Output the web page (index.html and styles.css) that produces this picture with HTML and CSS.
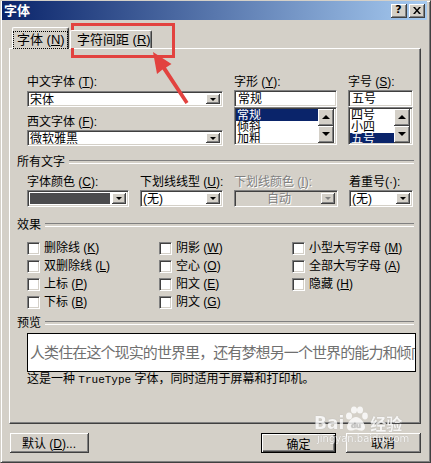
FILE: index.html
```html
<!DOCTYPE html>
<html>
<head>
<meta charset="UTF-8">
<title>字体</title>
<link rel="stylesheet" href="styles.css">
</head>
<body>
<div class="window">
    <div class="titlebar">
        <span class="title">字体</span>
        <div class="caption-buttons">
            <span class="cap-btn help">?</span>
            <span class="cap-btn close">
                <svg width="8" height="7" viewBox="0 0 8 7"><path d="M0 0h2l2 2.5 2-2.5h2l-3 3.5 3 3.5h-2l-2-2.5-2 2.5h-2l3-3.5z" fill="#000"/></svg>
            </span>
        </div>
    </div>
    <div class="dialog-body">
        <div class="tabs">
            <div class="tab active"><span class="focus">字体 (<u>N</u>)</span></div>
            <div class="tab">字符间距 (<u>R</u>)</div>
        </div>
        <div class="panel">
            <div class="font-row">
                <div class="col">
                    <label class="lbl">中文字体 (<u>T</u>):</label>
                    <div class="field combo first"><span class="value">宋体</span><span class="drop"></span></div>
                    <label class="lbl second-lbl">西文字体 (<u>F</u>):</label>
                    <div class="field combo second"><span class="value">微软雅黑</span><span class="drop"></span></div>
                </div>
                <div class="col">
                    <label class="lbl">字形 (<u>Y</u>):</label>
                    <div class="field edit"><span class="value">常规</span></div>
                    <div class="field listbox">
                        <div class="items">
                            <div class="item sel">常规</div>
                            <div class="item">倾斜</div>
                            <div class="item">加粗</div>
                        </div>
                        <div class="vscroll"><span class="sbtn up"></span><span class="sbtn down"></span></div>
                    </div>
                </div>
                <div class="col">
                    <label class="lbl">字号 (<u>S</u>):</label>
                    <div class="field edit"><span class="value">五号</span></div>
                    <div class="field listbox">
                        <div class="items">
                            <div class="item">四号</div>
                            <div class="item">小四</div>
                            <div class="item sel">五号</div>
                        </div>
                        <div class="vscroll"><span class="sbtn up"></span><span class="sbtn down"></span></div>
                    </div>
                </div>
            </div>

            <div class="group-title all-text">所有文字</div>
            <div class="attr-row">
                <div class="col">
                    <label class="lbl">字体颜色 (<u>C</u>):</label>
                    <div class="field combo tall"><span class="swatch"></span><span class="drop"></span></div>
                </div>
                <div class="col">
                    <label class="lbl">下划线线型 (<u>U</u>):</label>
                    <div class="field combo tall"><span class="value">(无)</span><span class="drop"></span></div>
                </div>
                <div class="col">
                    <label class="lbl disabled">下划线颜色 (<u>I</u>):</label>
                    <div class="field combo tall off"><span class="value center">自动</span><span class="drop"></span></div>
                </div>
                <div class="col">
                    <label class="lbl">着重号(·):</label>
                    <div class="field combo tall"><span class="value">(无)</span><span class="drop"></span></div>
                </div>
            </div>

            <div class="group-title effects">效果</div>
            <div class="checks">
                <div class="check"><span class="box"></span><span>删除线 (<u>K</u>)</span></div>
                <div class="check"><span class="box"></span><span>阴影 (<u>W</u>)</span></div>
                <div class="check"><span class="box"></span><span>小型大写字母 (<u>M</u>)</span></div>
                <div class="check"><span class="box"></span><span>双删除线 (<u>L</u>)</span></div>
                <div class="check"><span class="box"></span><span>空心 (<u>O</u>)</span></div>
                <div class="check"><span class="box"></span><span>全部大写字母 (<u>A</u>)</span></div>
                <div class="check"><span class="box"></span><span>上标 (<u>P</u>)</span></div>
                <div class="check"><span class="box"></span><span>阳文 (<u>E</u>)</span></div>
                <div class="check"><span class="box"></span><span>隐藏 (<u>H</u>)</span></div>
                <div class="check"><span class="box"></span><span>下标 (<u>B</u>)</span></div>
                <div class="check"><span class="box"></span><span>阴文 (<u>G</u>)</span></div>
            </div>

            <div class="group-title preview-title">预览</div>
            <div class="preview">人类住在这个现实的世界里，还有梦想另一个世界的能力和倾向</div>
            <p class="note">这是一种 <span class="mono">TrueType</span> 字体，同时适用于屏幕和打印机。</p>
        </div>
        <div class="buttons">
            <button class="btn wide">默认 (<u>D</u>)...</button>
            <div class="right-buttons">
                <button class="btn default">确定</button>
                <button class="btn">取消</button>
            </div>
        </div>
    </div>

    <div class="watermark">
        <div class="wm-logo">
            <span>Bai</span>
            <svg width="24" height="26" viewBox="0 0 24 26"><g fill="#fff"><ellipse cx="5" cy="10" rx="3" ry="3.6"/><ellipse cx="10" cy="4" rx="3" ry="3.6"/><ellipse cx="16" cy="4" rx="3" ry="3.6"/><ellipse cx="21" cy="10" rx="2.8" ry="3.4"/><path d="M12 11c-4 0-9 6-9 10 0 3 3 4 5 3.5s3-1 4-1 2 .5 4 1 5 0 5-3.5c0-4-5-10-9-10z"/></g><text x="12" y="22" font-size="7" text-anchor="middle" fill="#c8c8c8" font-family="DejaVu Sans">du</text></svg>
            <span class="wm-cn">经验</span>
        </div>
        <div class="wm-url">jingyan.baidu.com</div>
    </div>

    <svg class="annotation" width="431" height="463" viewBox="0 0 431 463">
        <rect x="72.5" y="24.5" width="101" height="32" fill="none" stroke="#e2423f" stroke-width="3"/>
        <polygon points="153,52 171.5,64 166,67.4 188.5,102 185.5,104 162.5,69.6 157,74" fill="#e2423f"/>
    </svg>
</div>
</body>
</html>
```

FILE: styles.css
```css
* {
margin: 0;
padding: 0;
border: 0;
box-sizing: border-box;
}

html, body {
width: 431px;
height: 463px;
overflow: hidden;
background-color: #d4d0c8;
font-family: "Liberation Sans", "Noto Sans CJK SC", sans-serif;
font-size: 12px;
line-height: 14px;
color: #000;
}

u {
text-decoration: underline;
text-underline-offset: 1px;
}

.window {
position: relative;
width: 431px;
height: 463px;
border: 1px solid;
border-color: #d4d0c8 #404040 #404040 #d4d0c8;
box-shadow: inset 1px 1px #fff, inset -1px -1px #808080;
padding: 0 3px 3px 1px;
display: flex;
flex-direction: column;
}

.titlebar {
height: 19px;
display: flex;
align-items: center;
justify-content: space-between;
padding: 0 2px 0 2px;
background: linear-gradient(to right, #0a246a, #a6caf0);
}

.title {
color: #fff;
font-weight: bold;
font-size: 13px;
}

.caption-buttons {
display: flex;
gap: 2px;
}

.cap-btn {
width: 16px;
height: 14px;
display: flex;
align-items: center;
justify-content: center;
background-color: #d4d0c8;
border-right: 1px solid #404040;
border-bottom: 1px solid #404040;
box-shadow: inset 1px 1px #fff, inset -1px -1px #808080;
font-family: "DejaVu Sans", sans-serif;
font-weight: bold;
font-size: 11px;
line-height: 12px;
}

.dialog-body {
flex: 1;
padding: 7px 6px 0 7px;
display: flex;
flex-direction: column;
}

/* tabs */
.tabs {
display: flex;
align-items: flex-end;
padding-left: 3px;
position: relative;
z-index: 1;
}

.tab {
height: 18px;
width: 82px;
margin-left: 1px;
padding: 2px 0 0 6px;
border-left: 1px solid #fff;
border-top: 1px solid #fff;
border-right: 1px solid #404040;
border-radius: 2px 2px 0 0;
box-shadow: inset -1px 0 #808080;
background-color: #d4d0c8;
font-size: 13px;
}

.tab.active {
height: 22px;
width: 57px;
margin-left: 0;
margin-bottom: -1px;
padding: 4px 0 0 1px;
}

.focus {
display: block;
width: 53px;
height: 16px;
padding-left: 3px;
outline: 1px dotted #000;
line-height: 15px;
}

.panel {
height: 376px;
border-left: 1px solid #fff;
border-top: 1px solid #fff;
border-right: 1px solid #404040;
border-bottom: 1px solid #404040;
box-shadow: inset -1px -1px #808080;
padding: 26px 6px 0 7px;
}

.lbl {
display: block;
height: 14px;
white-space: nowrap;
}

.lbl.disabled {
color: #808080;
text-shadow: 1px 1px #fff;
}

/* fields */
.field {
position: relative;
display: flex;
background-color: #fff;
border: 1px solid;
border-color: #808080 #fff #fff #808080;
box-shadow: inset 1px 1px #404040, inset -1px -1px #d4d0c8;
padding: 2px;
}

.value {
flex: 1;
line-height: 12px;
white-space: nowrap;
}

.value.center {
text-align: center;
color: #808080;
text-shadow: 1px 1px #fff;
}

.combo {
height: 16px;
}

.combo.first {
margin-top: 2px;
}

.combo.second {
margin-top: 1px;
}

.second-lbl {
margin-top: 8px;
}

.combo.tall {
height: 17px;
margin-top: 1px;
}

.combo.off {
background-color: #d4d0c8;
}

.drop {
width: 14px;
height: 100%;
background-color: #d4d0c8;
border-right: 1px solid #404040;
border-bottom: 1px solid #404040;
box-shadow: inset 1px 1px #fff, inset -1px -1px #808080;
display: flex;
align-items: center;
justify-content: center;
}

.drop::after {
content: "";
border-left: 3px solid transparent;
border-right: 3px solid transparent;
border-top: 3px solid #000;
margin-top: 1px;
}

.off .drop::after {
border-top-color: #808080;
}

.swatch {
flex: 1;
margin-right: 2px;
background-color: #4b4b4d;
}

.edit {
height: 17px;
margin-top: 1px;
padding-left: 3px;
}

.font-row {
display: grid;
grid-template-columns: 196px 103px 65px;
column-gap: 11px;
margin-left: 10px;
}

.listbox {
height: 38px;
padding: 1px 2px 1px 1px;
}

.items {
flex: 1;
overflow: hidden;
}

.item {
height: 12px;
line-height: 12px;
padding-left: 1px;
white-space: nowrap;
}

.item.sel {
background-color: #0a246a;
color: #fff;
}

.vscroll {
width: 16px;
display: flex;
flex-direction: column;
}

.sbtn {
flex: 1;
background-color: #d4d0c8;
border-right: 1px solid #404040;
border-bottom: 1px solid #404040;
box-shadow: inset 1px 1px #fff, inset -1px -1px #808080;
display: flex;
align-items: center;
justify-content: center;
}

.sbtn.up::after {
content: "";
border-left: 4px solid transparent;
border-right: 4px solid transparent;
border-bottom: 4px solid #000;
}

.sbtn.down::after {
content: "";
border-left: 4px solid transparent;
border-right: 4px solid transparent;
border-top: 4px solid #000;
}

/* group headers */
.group-title {
display: flex;
align-items: center;
height: 14px;
}

.group-title::after {
content: "";
flex: 1;
height: 2px;
margin-left: 4px;
border-top: 1px solid #808080;
border-bottom: 1px solid #fff;
}

.all-text {
margin-top: 9px;
}

.effects {
margin-top: 11px;
}

.preview-title {
margin-top: 5px;
}

.attr-row {
display: grid;
grid-template-columns: 102px 83px 104px 64px;
column-gap: 11px;
margin-top: 6px;
margin-left: 10px;
}

.checks {
display: grid;
grid-template-columns: 132px 133px auto;
grid-auto-rows: 18px;
margin-top: 7px;
margin-left: 10px;
}

.check {
display: flex;
align-items: center;
gap: 4px;
white-space: nowrap;
}

.box {
width: 13px;
height: 13px;
background-color: #fff;
border: 1px solid;
border-color: #808080 #fff #fff #808080;
box-shadow: inset 1px 1px #404040, inset -1px -1px #d4d0c8;
}

.preview {
height: 39px;
width: 389px;
margin-top: 3px;
margin-left: 10px;
border: 1px solid #000;
background-color: #fff;
color: #707070;
font-size: 15px;
letter-spacing: -0.9px;
line-height: 37px;
padding-left: 2px;
white-space: nowrap;
overflow: hidden;
}

.note {
margin-left: 10px;
height: 14px;
}

.mono {
font-family: "Liberation Mono", monospace;
font-size: 11px;
}

/* bottom buttons */
.buttons {
display: flex;
justify-content: space-between;
margin-top: 9px;
padding-left: 1px;
}

.right-buttons {
display: flex;
gap: 10px;
}

.btn {
width: 75px;
height: 20px;
background-color: #d4d0c8;
font-family: inherit;
font-size: 12px;
border-right: 1px solid #404040;
border-bottom: 1px solid #404040;
box-shadow: inset 1px 1px #fff, inset -1px -1px #808080;
}

.btn.wide {
width: 79px;
}

.btn.default {
border: 1px solid #000;
box-shadow: inset 1px 1px #fff, inset -1px -1px #404040, inset -2px -2px #808080;
}

/* overlays */
.watermark {
position: absolute;
left: 313px;
top: 405px;
color: #fff;
opacity: 0.8;
pointer-events: none;
}

.wm-logo {
display: flex;
align-items: flex-end;
font-family: "DejaVu Sans", sans-serif;
font-weight: bold;
font-size: 17px;
line-height: 18px;
text-shadow: 0 0 1px #999;
}

.wm-cn {
font-family: "Noto Sans CJK SC", sans-serif;
font-size: 16px;
margin-left: 2px;
}

.wm-url {
font-family: "DejaVu Sans", sans-serif;
font-size: 10px;
line-height: 12px;
margin-top: 1px;
margin-left: 3px;
text-shadow: 0 0 1px #999;
}

.annotation {
position: absolute;
left: -1px;
top: -1px;
pointer-events: none;
}
```
